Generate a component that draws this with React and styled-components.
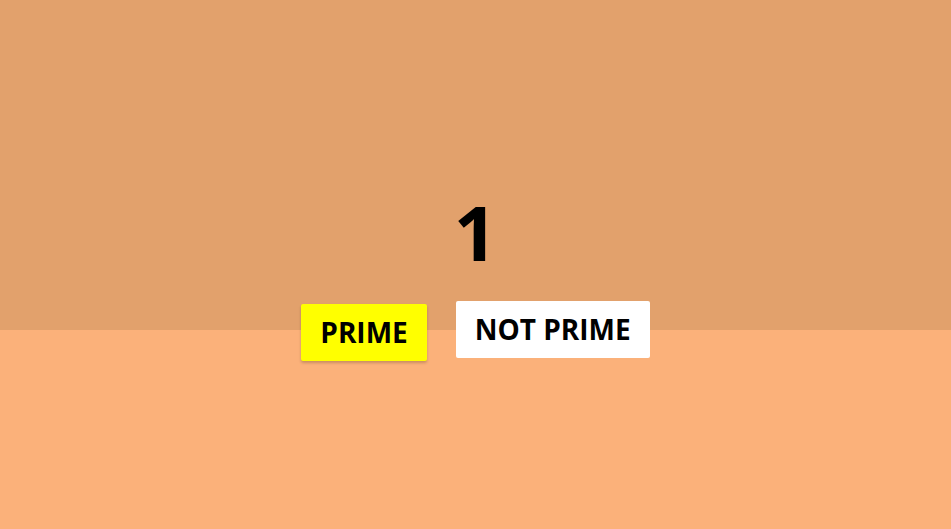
import React from 'react';
import styled, { createGlobalStyle } from 'styled-components';

const GlobalStyle = createGlobalStyle`
  html, body {
    margin: 0;
    padding: 0;
  }
  body {
    font-family: "Open Sans", "Noto Sans", sans-serif;
  }
`;

const Page = styled.div`
  height: 529px;
  background: linear-gradient(to bottom, #e2a16c 0, #e2a16c 330px, #fbb17a 330px);
  display: flex;
  flex-direction: column;
  align-items: center;
  padding-top: 177px;
  box-sizing: border-box;
`;

const Number = styled.div`
  font-size: 76px;
  font-weight: 700;
  line-height: 110px;
  color: #000;
`;

const Buttons = styled.div`
  display: flex;
  gap: 29px;
  align-items: flex-start;
  margin-top: 14px;
`;

const Choice = styled.button`
  font-family: "Open Sans", "Noto Sans", sans-serif;
  font-size: 28px;
  font-weight: 700;
  color: #000;
  background: ${p => (p.$active ? '#ffff00' : '#ffffff')};
  border: none;
  border-radius: 2px;
  padding: 9px 19px;
  line-height: 39px;
  cursor: pointer;
  box-shadow: ${p => (p.$active ? '0 2px 3px rgba(0,0,0,0.2)' : 'none')};
  transform: ${p => (p.$active ? 'translateY(3px)' : 'none')};
`;

export default function App() {
  return (
    <>
      <GlobalStyle />
      <Page>
        <Number>1</Number>
        <Buttons>
          <Choice $active>PRIME</Choice>
          <Choice>NOT PRIME</Choice>
        </Buttons>
      </Page>
    </>
  );
}
